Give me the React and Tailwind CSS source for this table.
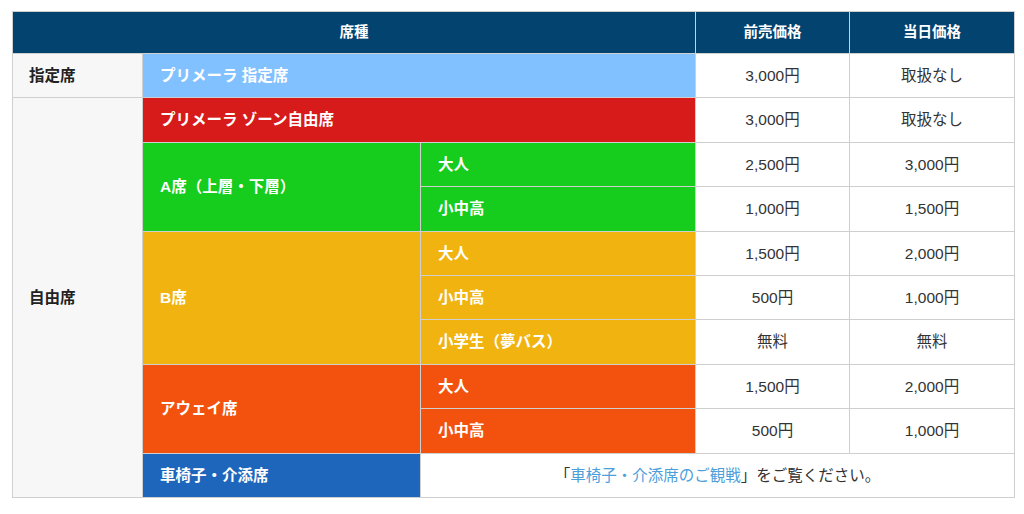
const font = "font-['Liberation_Sans','Noto_Sans_CJK_JP',sans-serif]";

const cell = "border border-[#cfcfcf] px-[17px] text-[15.5px] font-bold text-white";
const price = "border border-[#cfcfcf] bg-white text-center text-[15.5px] text-[#333]";
const side = "border border-[#cfcfcf] bg-[#f7f7f7] px-[16px] text-[15.5px] font-bold text-[#222]";

function PriceCells({ advance, sameDay }) {
  return (
    <>
      <td className={price}>{advance}</td>
      <td className={price}>{sameDay}</td>
    </>
  );
}

export default function App() {
  return (
    <div className={`min-h-screen bg-white pl-[12px] pt-[11px] ${font}`}>
      <table className="w-[1002px] table-fixed border-collapse border border-[#cfcfcf]">
        <colgroup>
          <col className="w-[130px]" />
          <col className="w-[278px]" />
          <col className="w-[275px]" />
          <col className="w-[154px]" />
          <col className="w-[165px]" />
        </colgroup>
        <thead>
          <tr className="h-[42px] bg-[#02436f] text-[14.5px] font-bold text-white">
            <th colSpan={3} className="border border-[#cfcfcf] text-center">席種</th>
            <th className="border border-[#cfcfcf] text-center">前売価格</th>
            <th className="border border-[#cfcfcf] text-center">当日価格</th>
          </tr>
        </thead>
        <tbody>
          <tr className="h-[44.4px]">
            <td className={side}>指定席</td>
            <td colSpan={2} className={`${cell} bg-[#82c1ff]`}>プリメーラ 指定席</td>
            <PriceCells advance="3,000円" sameDay="取扱なし" />
          </tr>
          <tr className="h-[44.4px]">
            <td rowSpan={9} className={side}>自由席</td>
            <td colSpan={2} className={`${cell} bg-[#d71a1a]`}>プリメーラ ゾーン自由席</td>
            <PriceCells advance="3,000円" sameDay="取扱なし" />
          </tr>
          <tr className="h-[44.4px]">
            <td rowSpan={2} className={`${cell} bg-[#16cc1c]`}>A席（上層・下層）</td>
            <td className={`${cell} bg-[#16cc1c]`}>大人</td>
            <PriceCells advance="2,500円" sameDay="3,000円" />
          </tr>
          <tr className="h-[44.4px]">
            <td className={`${cell} bg-[#16cc1c]`}>小中高</td>
            <PriceCells advance="1,000円" sameDay="1,500円" />
          </tr>
          <tr className="h-[44.4px]">
            <td rowSpan={3} className={`${cell} bg-[#f0b30f]`}>B席</td>
            <td className={`${cell} bg-[#f0b30f]`}>大人</td>
            <PriceCells advance="1,500円" sameDay="2,000円" />
          </tr>
          <tr className="h-[44.4px]">
            <td className={`${cell} bg-[#f0b30f]`}>小中高</td>
            <PriceCells advance="500円" sameDay="1,000円" />
          </tr>
          <tr className="h-[44.4px]">
            <td className={`${cell} bg-[#f0b30f]`}>小学生（夢バス）</td>
            <PriceCells advance="無料" sameDay="無料" />
          </tr>
          <tr className="h-[44.4px]">
            <td rowSpan={2} className={`${cell} bg-[#f2520e]`}>アウェイ席</td>
            <td className={`${cell} bg-[#f2520e]`}>大人</td>
            <PriceCells advance="1,500円" sameDay="2,000円" />
          </tr>
          <tr className="h-[44.4px]">
            <td className={`${cell} bg-[#f2520e]`}>小中高</td>
            <PriceCells advance="500円" sameDay="1,000円" />
          </tr>
          <tr className="h-[44.4px]">
            <td className={`${cell} bg-[#1e66bc]`}>車椅子・介添席</td>
            <td colSpan={3} className={price}>
              「<a href="#" className="text-[#4d9fdc]">車椅子・介添席のご観戦</a>」をご覧ください。
            </td>
          </tr>
        </tbody>
      </table>
    </div>
  );
}
